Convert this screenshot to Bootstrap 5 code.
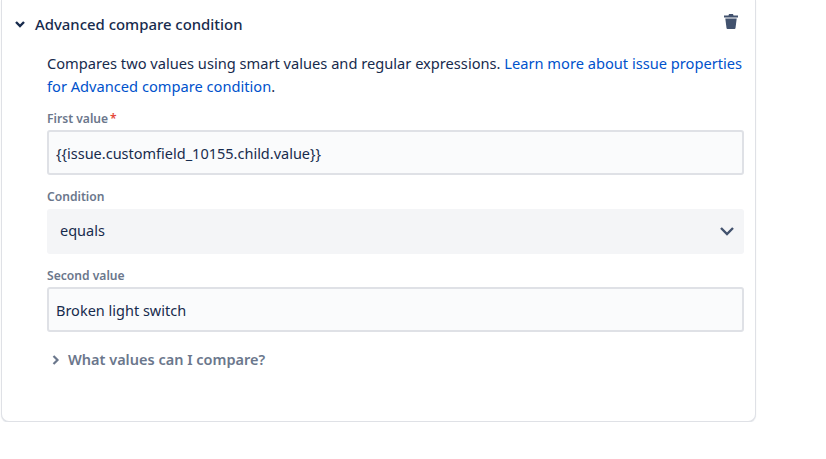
<!DOCTYPE html>
<html lang="en">
<head>
    <meta charset="UTF-8">
    <title>Advanced compare condition</title>
    <link href="https://cdn.jsdelivr.net/npm/bootstrap@5.3.2/dist/css/bootstrap.min.css" rel="stylesheet">
    <style>
        body {
            font-family: "Noto Sans", "Liberation Sans", sans-serif;
            font-size: 14px;
            color: #172b4d;
            background: #fff;
            overflow: hidden;
        }

        .rule-card {
            width: 755px;
            height: 422px;
            margin-left: 1px;
            padding: 0 11px 0 45px;
            background: #fff;
            border: 1px solid #dfe1e6;
            border-top: 0;
            border-radius: 0 0 8px 8px;
            box-shadow: 0 1px 1px rgba(9, 30, 66, .12);
        }

        .rule-head {
            height: 48px;
            margin-left: -34px;
            margin-right: 6px;
        }

        .rule-head .trash-icon {
            margin-bottom: 5px;
        }

        .rule-title {
            font-size: 14.9px;
            font-weight: 500;
            margin-left: 8px;
        }

        .rule-desc {
            font-size: 14.65px;
            line-height: 23px;
            margin-top: 3.5px;
            margin-bottom: 0;
            margin-right: -2px;
            color: #172b4d;
        }

        .rule-desc a {
            color: #0052cc;
            text-decoration: none;
        }

        .field-label {
            display: block;
            height: 20px;
            line-height: 20px;
            font-size: 12.1px;
            font-weight: 600;
            color: #6b778c;
            margin: 0 0 1.5px;
        }

        .field-label span {
            color: #e5493a;
            margin-left: 2px;
        }

        .field-group {
            margin-top: 12px;
        }

        .rule-desc + .field-group {
            margin-top: 11px;
        }

        .rule-card .form-control,
        .rule-card .form-select {
            height: 45px;
            font-size: 14.5px;
            color: #172b4d;
            border-radius: 3px;
            box-shadow: none;
        }

        .rule-card .form-control {
            background: #fafbfc;
            border: 2px solid #dfe1e6;
            padding: 0 7px;
        }

        .rule-card .form-select {
            background-color: #f4f5f7;
            background-image: none;
            border: 0;
            padding: 0 13px;
        }

        .select-wrap svg {
            position: absolute;
            right: 10px;
            top: 16px;
        }

        .more-link {
            margin-top: 17px;
            font-size: 14.5px;
            font-weight: 600;
            color: #6b778c;
        }

        .more-link svg {
            margin-left: 4px;
            margin-right: 7px;
        }
    </style>
</head>
<body>
    <div class="rule-card">
        <div class="rule-head d-flex align-items-center">
            <svg width="14" height="14" viewBox="0 0 14 14" fill="none" stroke="#172b4d" stroke-width="2.4"><path d="M3 5l4 4 4-4"/></svg>
            <span class="rule-title">Advanced compare condition</span>
            <svg class="trash-icon ms-auto" width="14" height="15" viewBox="0 0 14 15" fill="#42526e"><path d="M5 0h4l.5 1.500H14v2H0v-2h4.500zM1.300 4.500h11.400l-1.200 9.500q-.1 1-1 1h-7q-.9 0-1-1z"/></svg>
        </div>
        <p class="rule-desc">Compares two values using smart values and regular expressions. <a href="#">Learn more about issue properties for Advanced compare condition</a>.</p>

        <div class="field-group">
            <label class="field-label" for="firstValue">First value<span>*</span></label>
            <input class="form-control" id="firstValue" type="text" value="{{issue.customfield_10155.child.value}}">
        </div>

        <div class="field-group">
            <label class="field-label" for="condition">Condition</label>
            <div class="select-wrap position-relative">
                <select class="form-select" id="condition">
                    <option>equals</option>
                </select>
                <svg width="14" height="12" viewBox="0 0 14 12" fill="none" stroke="#42526e" stroke-width="2.4"><path d="M1 3l6 6 6-6"/></svg>
            </div>
        </div>

        <div class="field-group">
            <label class="field-label" for="secondValue">Second value</label>
            <input class="form-control" id="secondValue" type="text" value="Broken light switch">
        </div>

        <div class="more-link d-flex align-items-center">
            <svg width="10" height="12" viewBox="0 0 10 12" fill="none" stroke="#6b778c" stroke-width="2.2"><path d="M2.500 2l4 4-4 4"/></svg>
            What values can I compare?
        </div>
    </div>

    <script src="https://cdn.jsdelivr.net/npm/bootstrap@5.3.2/dist/js/bootstrap.bundle.min.js"></script>
</body>
</html>
